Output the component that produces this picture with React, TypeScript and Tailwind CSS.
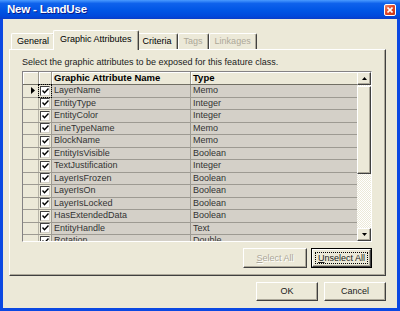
import React from 'react'

// ── Data ────────────────────────────────────────────────────────

const attributes: [string, string][] = [
  ['LayerName', 'Memo'],
  ['EntityType', 'Integer'],
  ['EntityColor', 'Integer'],
  ['LineTypeName', 'Memo'],
  ['BlockName', 'Memo'],
  ['EntityIsVisible', 'Boolean'],
  ['TextJustification', 'Integer'],
  ['LayerIsFrozen', 'Boolean'],
  ['LayerIsOn', 'Boolean'],
  ['LayerIsLocked', 'Boolean'],
  ['HasExtendedData', 'Boolean'],
  ['EntityHandle', 'Text'],
  ['Rotation', 'Double'],
]

const tabs = [
  { label: 'General', state: 'normal' },
  { label: 'Graphic Attributes', state: 'active' },
  { label: 'Criteria', state: 'normal' },
  { label: 'Tags', state: 'disabled' },
  { label: 'Linkages', state: 'disabled' },
]

const raised =
  'border border-t-white border-l-white border-r-[#404040] border-b-[#404040] shadow-[inset_-1px_-1px_0_#aca899] bg-[#ece9d8]'

// ── Small pieces ────────────────────────────────────────────────

function CheckBox() {
  return (
    <div className="w-[10px] h-[10px] bg-white border border-t-[#404040] border-l-[#404040] border-r-[#d4d0c8] border-b-[#d4d0c8] flex items-center justify-center">
      <svg width="7" height="6" viewBox="0 0 7 6">
        <path d="M0.5 2.5 L2.5 4.8 L6.5 0.5" stroke="#000" strokeWidth="1.4" fill="none" />
      </svg>
    </div>
  )
}

function ScrollButton({ dir }: { dir: 'up' | 'down' }) {
  return (
    <div className={`h-[13px] w-full shrink-0 flex items-center justify-center ${raised}`}>
      <svg width="5" height="3" viewBox="0 0 5 3">
        {dir === 'up' ? <path d="M2.5 0 L5 3 L0 3 Z" fill="#000" /> : <path d="M0 0 L5 0 L2.5 3 Z" fill="#000" />}
      </svg>
    </div>
  )
}

function Button({ children, disabled, focused, className }: {
  children: React.ReactNode
  disabled?: boolean
  focused?: boolean
  className?: string
}) {
  const label = (
    <span
      className={
        disabled
          ? 'text-[#aca899] [text-shadow:1px_1px_0_#fff]'
          : 'text-[#1a1a1a]'
      }
    >
      {children}
    </span>
  )
  if (focused) {
    return (
      <div className={`border border-black h-[20px] ${className}`}>
        <div className={`h-full w-full flex items-center justify-center p-[2px] ${raised}`}>
          <div className="h-full w-full flex items-center justify-center border border-dotted border-black">
            {label}
          </div>
        </div>
      </div>
    )
  }
  return (
    <div className={`flex items-center justify-center ${raised} ${className}`}>
      {label}
    </div>
  )
}

// ── Component ───────────────────────────────────────────────────

export default function App() {
  return (
    <div
      className="w-[400px] h-[311px] flex flex-col bg-[#0b48e2] overflow-hidden text-[9px] leading-[11px]"
      style={{ fontFamily: '"Liberation Sans", Arial, sans-serif' }}
    >
      {/* Title bar */}
      <div className="h-[19px] shrink-0 flex items-center justify-between pl-[7px] pr-[4px] bg-[linear-gradient(180deg,#4a9bff_0%,#0f62ec_18%,#0055e5_55%,#0049dc_85%,#0a3cc8_100%)]">
        <span className="text-white font-bold text-[11.5px] tracking-[-0.2px] [text-shadow:1px_1px_0_#0a1a8a]">
          New - LandUse
        </span>
        <div className="w-[12px] h-[12px] rounded-[2px] border border-white bg-[linear-gradient(135deg,#f08a6a_0%,#e2482a_45%,#c63512_100%)] flex items-center justify-center">
          <svg width="6" height="6" viewBox="0 0 6 6">
            <path d="M0.5 0.5 L5.5 5.5 M5.5 0.5 L0.5 5.5" stroke="#fff" strokeWidth="1.6" />
          </svg>
        </div>
      </div>

      {/* Dialog body */}
      <div className="flex-1 mx-[3px] mb-[3px] bg-[#ece9d8] pt-[11px] pl-[6px] pr-[11px] flex flex-col">
        {/* Tabs */}
        <div className="h-[19px] flex items-end pl-[2px]">
          {tabs.map(t =>
            t.state === 'active' ? (
              <div
                key={t.label}
                className="relative z-10 h-[20px] -mb-px -mx-[2px] px-[6px] pt-[3px] bg-[#ece9d8] border-l border-t border-r border-l-white border-t-white border-r-[#404040] rounded-t-[2px] shadow-[inset_-1px_0_0_#aca899]"
              >
                {t.label}
              </div>
            ) : (
              <div
                key={t.label}
                className={`h-[16px] px-[5px] pt-[2px] border-l border-t border-r border-l-white border-t-white border-r-[#404040] rounded-t-[2px] shadow-[inset_-1px_0_0_#aca899] ${
                  t.state === 'disabled' ? 'text-[#aca899]' : 'text-black'
                }`}
              >
                {t.label}
              </div>
            )
          )}
        </div>

        {/* Tab panel */}
        <div className="h-[227px] border border-t-white border-l-white border-r-[#404040] border-b-[#404040] shadow-[inset_-1px_-1px_0_#aca899] pt-[7px] pl-[12px] pr-[13px] flex flex-col">
          <p className="h-[11px] text-[#1a1a1a]">Select the graphic attributes to be exposed for this feature class.</p>

          {/* Grid */}
          <div className="mt-[3px] h-[171px] w-[350px] border border-t-[#848284] border-l-[#848284] border-r-white border-b-white flex">
            <div className="w-[334px] flex flex-col overflow-hidden">
              {/* Header */}
              <div className="h-[13px] shrink-0 flex bg-[#ece9d8] border-b border-[#716f64] font-bold text-[9.5px]">
                <div className="w-[16px] border-r border-[#9d9a8e] shadow-[inset_1px_1px_0_#fff]" />
                <div className="w-[13px] border-r border-[#9d9a8e] shadow-[inset_1px_1px_0_#fff]" />
                <div className="w-[139px] border-r border-[#9d9a8e] pl-[2px] shadow-[inset_1px_1px_0_#fff]">Graphic Attribute Name</div>
                <div className="flex-1 pl-[2px] shadow-[inset_1px_1px_0_#fff]">Type</div>
              </div>
              {/* Rows */}
              {attributes.map(([name, type], i) => (
                <div key={name} className="h-[12.5px] shrink-0 flex border-b border-[#9d9a92] text-[#333333]">
                  <div className="w-[16px] bg-[#ece9d8] border-r border-[#b8b5a8] flex items-center pl-[8px]">
                    {i === 0 && (
                      <svg width="4" height="7" viewBox="0 0 4 7">
                        <path d="M0 0 L4 3.5 L0 7 Z" fill="#000" />
                      </svg>
                    )}
                  </div>
                  <div className="w-[13px] bg-[#ece9d8] border-r border-[#9d9a92] flex items-center justify-center">
                    <div className={i === 0 ? 'border border-dotted border-black p-px' : 'p-[2px]'}>
                      <CheckBox />
                    </div>
                  </div>
                  <div className="w-[139px] bg-[#d4d0c8] border-r border-[#9d9a92] pl-[2px]">{name}</div>
                  <div className="flex-1 bg-[#d4d0c8] pl-[2px]">{type}</div>
                </div>
              ))}
            </div>
            {/* Scrollbar */}
            <div className="w-[14px] flex flex-col bg-[repeating-conic-gradient(#ece9d8_0_25%,#ffffff_0_50%)] bg-[length:2px_2px]">
              <ScrollButton dir="up" />
              <div className={`h-[88px] mt-px ${raised}`} />
              <div className="flex-1" />
              <ScrollButton dir="down" />
            </div>
          </div>

          {/* Select buttons */}
          <div className="mt-[6px] flex justify-end gap-[4px]">
            <Button disabled className="w-[64px] h-[20px]">
              <u>S</u>elect All
            </Button>
            <Button focused className="w-[61px]">
              <u>U</u>nselect All
            </Button>
          </div>
        </div>

        {/* Dialog buttons */}
        <div className="mt-[6px] flex justify-end gap-[6px]">
          <Button className="w-[62px] h-[19px]">OK</Button>
          <Button className="w-[62px] h-[19px]">Cancel</Button>
        </div>
      </div>
    </div>
  )
}
